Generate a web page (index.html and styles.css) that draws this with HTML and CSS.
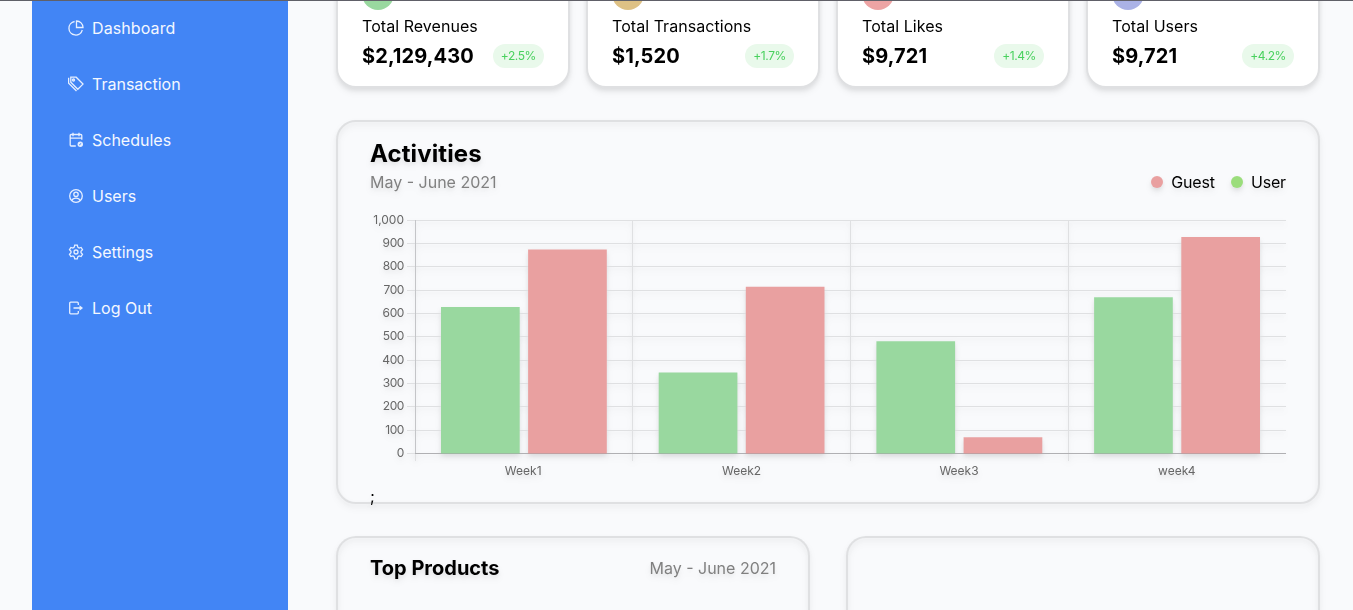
FILE: index.html
```
<!DOCTYPE html>
<html lang="en">
<head>
<meta charset="utf-8">
<title>Dashboard</title>
<link rel="stylesheet" href="styles.css">
</head>
<body>
<div class="layout">
  <nav class="sidebar">
    <a class="nav-item"><svg class="nav-icon" viewBox="0 0 16 16"><path d="M6.6 1.5A6.8 6.8 0 1 0 14.3 10"/><path d="M8.5 1v6.5H15A6.5 6.5 0 0 0 8.5 1z"/></svg><span class="n1">Dashboard</span></a>
    <a class="nav-item"><svg class="nav-icon" viewBox="0 0 16 16"><path d="M2.8 1.2h5.4l6.8 6.9-5.2 5.2-7-7z"/><path d="M.6 1.7v5.4l7.9 7.9"/><circle cx="5.5" cy="4" r="1"/></svg>Transaction</a>
    <a class="nav-item"><svg class="nav-icon" viewBox="0 0 16 16"><path d="M7.8 14H3.2a1 1 0 0 1-1-1V3.5a1 1 0 0 1 1-1h9.600a1 1 0 0 1 1 1v4.200M2.200 6.200h11.600M5 .8v3.400M11 .8v3.400"/><circle cx="12.300" cy="12.200" r="2.700" class="solid"/><path d="M11.200 13l2-1.600" class="cut"/></svg>Schedules</a>
    <a class="nav-item"><svg class="nav-icon" viewBox="0 0 16 16"><circle cx="8" cy="8" r="6.3"/><circle cx="8" cy="6.3" r="2.2"/><path d="M3.9 12.4c.7-1.7 2.3-2.2 4.1-2.2s3.4.5 4.1 2.2"/></svg>Users</a>
    <a class="nav-item"><svg class="nav-icon" viewBox="0 0 16 16"><path d="M6.7 1.2h2.6l.5 2 1.3.8 2-.6 1.4 2.3-1.5 1.5v1.6l1.5 1.5-1.4 2.3-2-.6-1.3.8-.5 2H6.7l-.5-2-1.3-.8-2 .6-1.4-2.3L3 8.800V7.200L1.500 5.700l1.400-2.300 2 .6 1.300-.8z"/><circle cx="8" cy="8" r="2"/></svg>Settings</a>
    <a class="nav-item"><svg class="nav-icon" viewBox="0 0 16 16"><path d="M10.300 5V3.200a1 1 0 0 0-1-1H2.700a1 1 0 0 0-1 1v9.600a1 1 0 0 0 1 1h6.600a1 1 0 0 0 1-1V11M5.500 8h7.500"/><path d="M11.500 5.200 15 8 11.500 10.800z" class="solid"/></svg>Log Out</a>
  </nav>

  <main class="content">
    <section class="stats">
      <article class="card stat">
        <span class="stat-icon green"></span>
        <p>Total Revenues</p>
        <div class="stat-row"><strong>$2,129,430</strong><span class="pill">+2.5%</span></div>
      </article>
      <article class="card stat">
        <span class="stat-icon gold"></span>
        <p>Total Transactions</p>
        <div class="stat-row"><strong>$1,520</strong><span class="pill">+1.7%</span></div>
      </article>
      <article class="card stat">
        <span class="stat-icon red"></span>
        <p>Total Likes</p>
        <div class="stat-row"><strong>$9,721</strong><span class="pill">+1.4%</span></div>
      </article>
      <article class="card stat">
        <span class="stat-icon blue"></span>
        <p>Total Users</p>
        <div class="stat-row"><strong>$9,721</strong><span class="pill">+4.2%</span></div>
      </article>
    </section>

    <section class="card activities">
      <h2>Activities</h2>
      <div class="activities-sub">
        <span class="range">May - June 2021</span>
        <div class="legend">
          <span class="key"><i class="dot guest"></i>Guest</span>
          <span class="key"><i class="dot user"></i>User</span>
        </div>
      </div>
      <svg class="chart" viewBox="370 210 916 276">
        <path class="grid" d="M407 220.500h879M407 243.500h879M407 266.500h879M407 290.500h879M407 313.500h879M407 336.500h879M407 360.500h879M407 383.500h879M407 406.500h879M407 430.500h879M407 453.500h8M632.500 220v241M850.500 220v241M1068.500 220v241M415.500 454v7"/>
        <path class="axis" d="M415.500 220v234M415 453.500h871"/>
        <g class="bar-user">
          <path d="M441 307h78.700v146.500h-78.700z"/><path d="M658.700 372.500h78.700v81h-78.700z"/><path d="M876.400 341.300h78.700v112.200h-78.700z"/><path d="M1094.100 297.300h78.700v156.200h-78.700z"/>
        </g>
        <g class="bar-guest">
          <path d="M528.100 249.600h78.700v203.900h-78.700z"/><path d="M745.800 286.800h78.700v166.700h-78.700z"/><path d="M963.600 437.300h78.700v16.200h-78.700z"/><path d="M1181.300 237h78.700v216.500h-78.700z"/>
        </g>
        <path class="baseline" d="M415 453.500h871"/>
        <g class="ticks y-ticks">
          <text x="404" y="224">1,000</text><text x="404" y="247">900</text><text x="404" y="270">800</text><text x="404" y="294">700</text><text x="404" y="317">600</text><text x="404" y="340">500</text><text x="404" y="364">400</text><text x="404" y="387">300</text><text x="404" y="410">200</text><text x="404" y="434">100</text><text x="404" y="457">0</text>
        </g>
        <g class="ticks x-ticks">
          <text x="523.200" y="475">Week1</text><text x="741.500" y="475">Week2</text><text x="959" y="475">Week3</text><text x="1176.800" y="475">week4</text>
        </g>
      </svg>
      <div class="trailing">;</div>
    </section>

    <section class="bottom">
      <article class="card panel">
        <h3>Top Products</h3>
        <span class="range">May - June 2021</span>
      </article>
      <article class="card panel"></article>
    </section>
  </main>
</div>
</body>
</html>
```
FILE: styles.css
```
* { box-sizing: border-box; margin: 0; }
body {
  height: 610px;
  overflow: hidden;
  background: #f9fafc;
  color: #000;
  font: 16px/24px Inter, sans-serif;
  border-top: 1px solid #606068;
}
.layout { display: flex; height: 609px; padding-left: 32px; }
.sidebar { width: 256px; flex: none; background: #4285f5; }
.nav-item {
  display: flex;
  align-items: center;
  gap: 8px;
  height: 56px;
  padding-left: 36px;
  color: #f4f8ff;
  letter-spacing: 0;
}
.n1 { letter-spacing: .1px; }
.nav-item:first-child { height: 55px; padding-bottom: 1px; }
.nav-icon { width: 16px; height: 16px; fill: none; stroke: #e6efff; stroke-width: 1.3; }
.nav-icon .solid { fill: #e6efff; stroke: none; }
.nav-icon .cut { stroke: #4285f5; stroke-width: 1; }
.content { flex: 1; padding: 0 33px 0 48px; }
.card {
  border: 2px solid #dfe0e2;
  border-radius: 20px;
  filter: drop-shadow(0 4px 3px rgba(0, 0, 0, .07)) drop-shadow(0 2px 2px rgba(0, 0, 0, .06));
}
.stats { display: grid; grid-template-columns: repeat(4, 1fr); gap: 16px; margin-top: -41px; }
.stat { height: 128px; padding: 16px 24px; background: #fff; }
.stat-icon { display: block; width: 32px; height: 32px; border-radius: 50%; margin-bottom: 4px; }
.green { background: #99d89f; }
.gold { background: #dec185; }
.red { background: #eda4a4; }
.blue { background: #aab2e6; }
.stat p { letter-spacing: .05px; }
.stat-row { display: flex; align-items: center; justify-content: space-between; height: 28px; margin-top: 4px; }
.stat-row strong { font-size: 20px; letter-spacing: .1px; }
.pill {
  padding: 0 8px;
  border-radius: 12px;
  background: #e9f9eb;
  color: #49d15e;
  font-size: 12px;
  letter-spacing: -.4px;
}
.activities { height: 384px; margin-top: 32px; padding: 16px 32px 0; }
h2 { font-size: 24px; line-height: 32px; letter-spacing: .1px; }
h3 { font-size: 20px; line-height: 28px; }
.activities-sub, .legend, .key { display: flex; align-items: center; }
.activities-sub { justify-content: space-between; }
.legend { gap: 16px; }
.key { gap: 8px; letter-spacing: -.15px; }
.dot { width: 12px; height: 12px; border-radius: 50%; }
.guest { background: #e9a0a0; }
.user { background: #9bdd7c; }
.range { color: #808080; }
.chart { display: block; width: 916px; height: 276px; margin-top: 16px; }
.grid { stroke: #dfe0e2; }
.axis { stroke: #c4c5c8; }
.grid, .axis, .baseline { fill: none; }
.baseline { stroke: rgba(0, 0, 0, .1); }
.bar-user { fill: #99d89f; }
.bar-guest { fill: #e9a0a0; }
.ticks { fill: #666; font-size: 12px; }
.y-ticks { text-anchor: end; letter-spacing: -.4px; }
.y-ticks text:first-child { letter-spacing: 0; }
.x-ticks { text-anchor: middle; }
.trailing { margin-top: -2px; }
.bottom { display: grid; grid-template-columns: 1fr 1fr; gap: 36px; margin-top: 32px; }
.panel { display: flex; justify-content: space-between; align-items: flex-start; height: 74px; padding: 16px 32px; border-bottom: 0; border-radius: 20px 20px 0 0; }
.panel .range { line-height: 28px; }
```
